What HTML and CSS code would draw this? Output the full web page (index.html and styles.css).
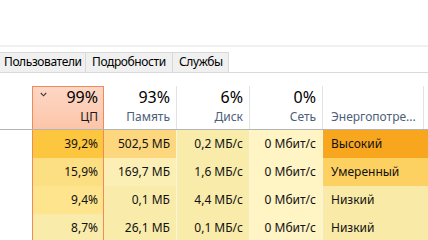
FILE: index.html
```html
<!DOCTYPE html>
<html lang="ru">
<head>
<meta charset="utf-8">
<link rel="stylesheet" href="styles.css">
</head>
<body>
<div class="app">
  <div class="band"></div>
  <div class="tabs">
    <div class="tab tab-users">Пользователи</div>
    <div class="tab tab-details">Подробности</div>
    <div class="tab tab-services">Службы</div>
  </div>
  <div class="table">
    <div class="thead">
      <div class="th th-name"></div>
      <div class="th th-num th-cpu">
        <div class="th-top">
          <svg class="chevron" width="7" height="5" viewBox="0 0 7 5"><polyline points="0.8,1 3.5,3.8 6.2,1" fill="none" stroke="#3a3a3a" stroke-width="1.1"/></svg>
          <span class="th-value">99%</span>
        </div>
        <div class="th-label th-label-active">ЦП</div>
      </div>
      <div class="th th-num">
        <div class="th-value">93%</div>
        <div class="th-label">Память</div>
      </div>
      <div class="th th-num">
        <div class="th-value">6%</div>
        <div class="th-label">Диск</div>
      </div>
      <div class="th th-num">
        <div class="th-value">0%</div>
        <div class="th-label">Сеть</div>
      </div>
      <div class="th th-text">
        <div class="th-value">&nbsp;</div>
        <div class="th-label">Энергопотре...</div>
      </div>
      <div class="th th-rest"></div>
    </div>

    <div class="tr">
      <div class="td td-name"></div>
      <div class="td td-cpu h5">39,2%</div>
      <div class="td h4">502,5 МБ</div>
      <div class="td h1">0,2 МБ/с</div>
      <div class="td h0">0 Мбит/с</div>
      <div class="td td-text e-high">Высокий</div>
    </div>
    <div class="tr">
      <div class="td td-name"></div>
      <div class="td td-cpu h3">15,9%</div>
      <div class="td h2">169,7 МБ</div>
      <div class="td h1">1,6 МБ/с</div>
      <div class="td h0">0 Мбит/с</div>
      <div class="td td-text e-mid">Умеренный</div>
    </div>
    <div class="tr">
      <div class="td td-name"></div>
      <div class="td td-cpu h3b">9,4%</div>
      <div class="td h1">0,1 МБ</div>
      <div class="td h1">4,4 МБ/с</div>
      <div class="td h0">0 Мбит/с</div>
      <div class="td td-text e-low">Низкий</div>
    </div>
    <div class="tr">
      <div class="td td-name"></div>
      <div class="td td-cpu h1">8,7%</div>
      <div class="td h1">26,1 МБ</div>
      <div class="td h1">0,1 МБ/с</div>
      <div class="td h0">0 Мбит/с</div>
      <div class="td td-text e-low">Низкий</div>
    </div>
  </div>
</div>
</body>
</html>
```

FILE: styles.css
```css
* { box-sizing: border-box; }

html, body {
  margin: 0;
  padding: 0;
  background: #ffffff;
  overflow: hidden;
}

body {
  width: 428px;
  height: 240px;
  font-family: "Noto Sans", "Segoe UI", sans-serif;
  font-size: 12px;
  color: #000000;
}

.app {
  padding-top: 45px;
}

.band {
  height: 2px;
  background: #f0f0f0;
  margin-bottom: 5px;
}

.tabs {
  display: flex;
  height: 21px;
  border-bottom: 1px solid #d9d9d9;
}

.tab {
  height: 20px;
  background: #f0f0f0;
  border: 1px solid #d9d9d9;
  border-bottom: none;
  border-left: none;
  padding: 0 0 2px 6px;
  line-height: 17px;
  letter-spacing: -0.4px;
  white-space: nowrap;
  overflow: hidden;
  color: #000;
}

.tab-users { width: 89px; margin-left: -3px; border-left: 1px solid #d9d9d9; }
.tab-details { width: 87px; }
.tab-services { width: 56px; }

.table {
  display: flex;
  flex-direction: column;
}

.thead,
.tr {
  display: grid;
  grid-template-columns: 32px 72px 73px 73px 73px 101px 1fr;
}

.thead {
  padding-top: 13px;
  border-bottom: 1px solid #b4b4b4;
}

.th {
  height: 43px;
  padding-top: 1px;
}

.th-num {
  text-align: right;
  padding-right: 6px;
  border-right: 1px solid #e3e3e3;
}

.th-text {
  padding-left: 8px;
  border-right: 1px solid #e3e3e3;
}

.th-cpu {
  background: linear-gradient(#fdd7c5, #fcc5a9);
  border: 1px solid #f08a58;
  border-bottom: none;
  padding-right: 5px;
  padding-top: 0;
  padding-left: 7px;
}

.th-top {
  display: flex;
  justify-content: space-between;
  align-items: flex-start;
}

.chevron {
  display: block;
  margin-top: 5px;
}

.th-value {
  display: block;
  font-size: 16px;
  line-height: 20px;
  color: #000;
}

.th-label {
  margin-top: 2px;
  font-size: 12px;
  line-height: 16px;
  color: #4c607a;
  white-space: nowrap;
}

.th-label-active {
  color: #1a1a1a;
}

.td {
  height: 28px;
  line-height: 28px;
  text-align: right;
  padding-right: 6px;
  border-right: 1px solid #fbf4dc;
  white-space: nowrap;
  color: #111;
}

.td-name {
  background: #ffffff;
  border-right: none;
}

.td-cpu {
  border-left: 1px solid #f08a58;
  border-right: 1px solid #f08a58;
  padding-right: 5px;
}

.td-text {
  grid-column: span 2;
  text-align: left;
  padding-left: 8px;
  border-right: none;
}

.h0 { background: #fff4c4; }
.h1 { background: #f9ecaa; }
.h2 { background: #fbefb5; }
.h3 { background: #fddf83; }
.h3b { background: #fde48d; }
.h4 { background: #fdd77d; }
.h5 { background: #fcc73f; }

.e-high { background: #f9a61f; }
.e-mid { background: #fdd062; }
.e-low { background: #f9eaa7; }
```
